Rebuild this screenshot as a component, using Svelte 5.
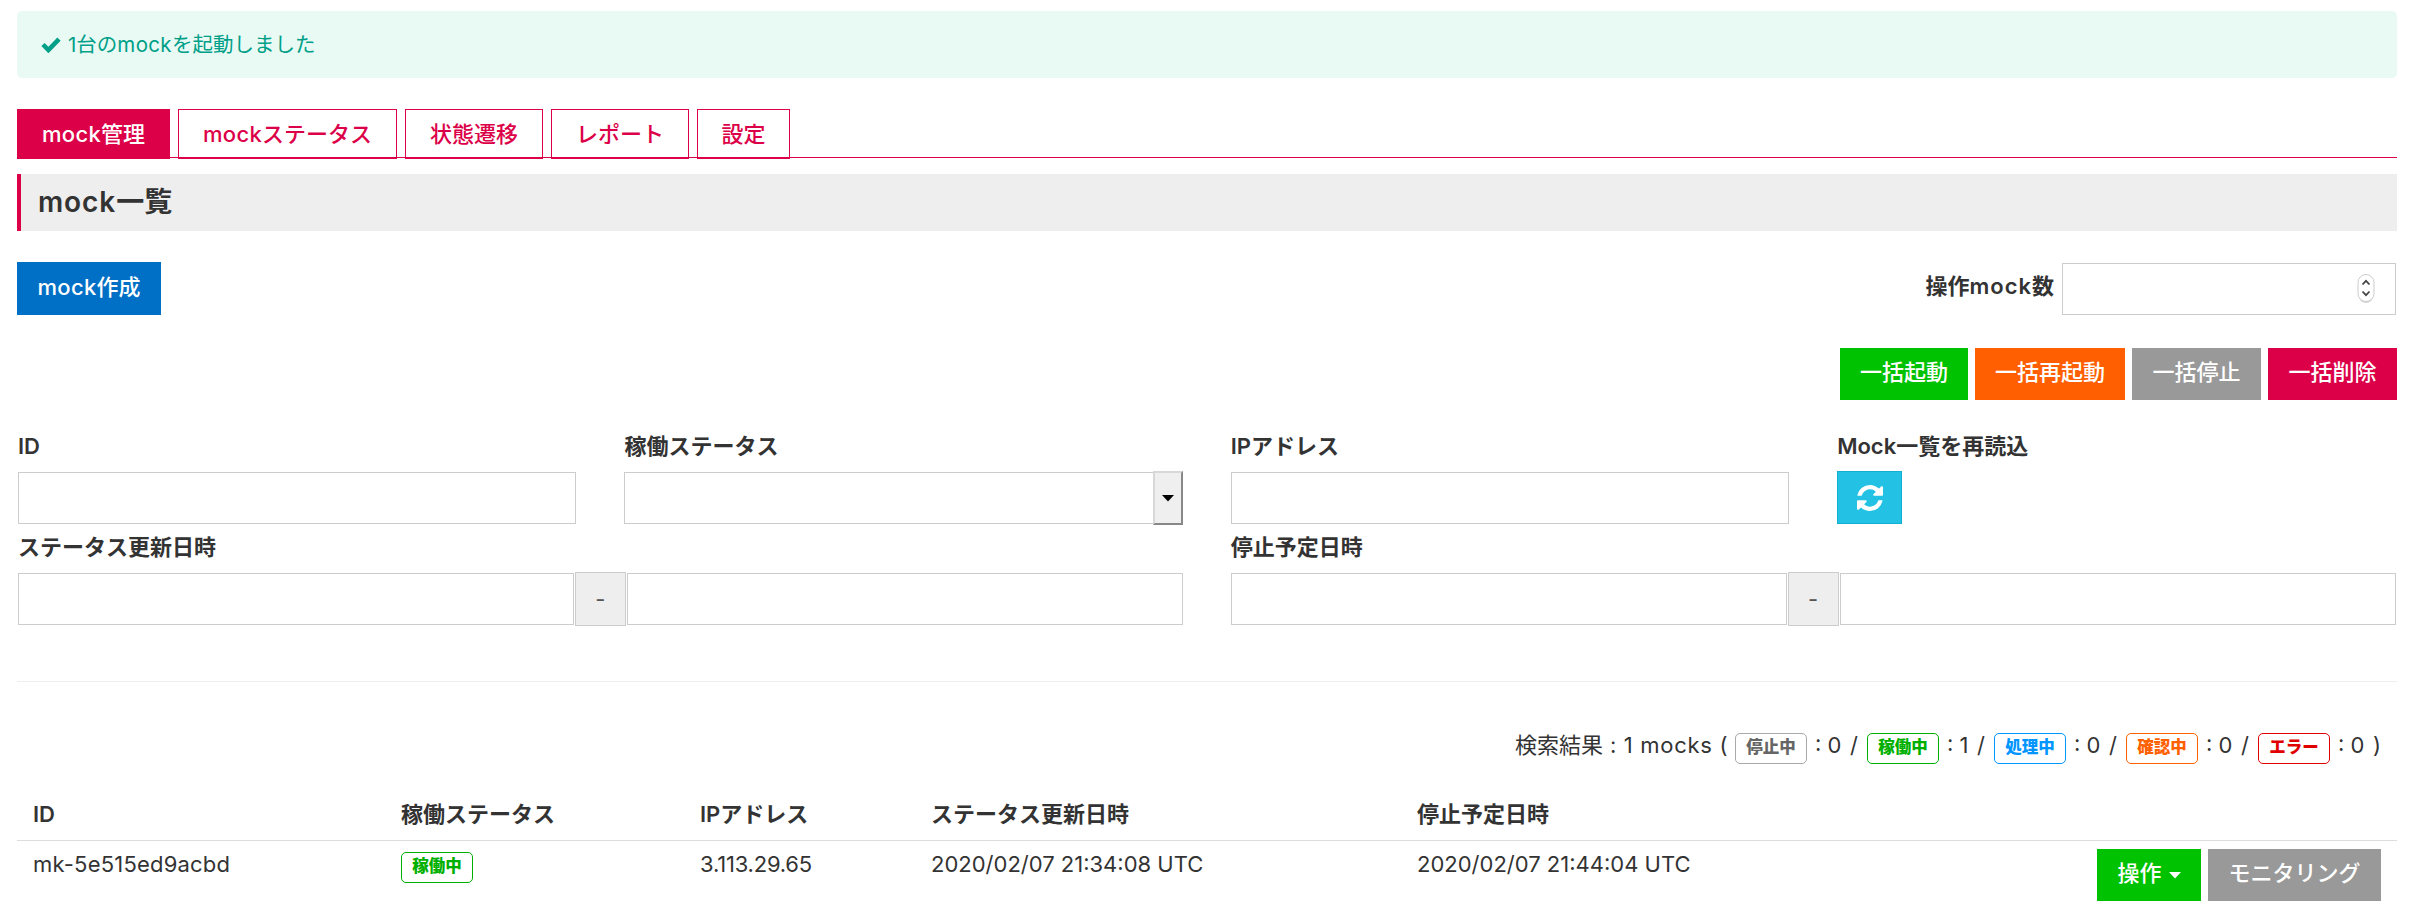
<script>
  const tabs = [
    { latin: 'mock', text: '管理', w: 153, active: true },
    { latin: 'mock', text: 'ステータス', w: 219 },
    { text: '状態遷移', w: 138 },
    { text: 'レポート', w: 138 },
    { text: '設定', w: 93 },
  ];
  const bulk = [
    { text: '一括起動', kind: 'green', w: 128 },
    { text: '一括再起動', kind: 'orange', w: 150 },
    { text: '一括停止', kind: 'gray', w: 129 },
    { text: '一括削除', kind: 'red', w: 129 },
  ];
  const counts = [
    { text: '停止中', kind: 'stopped', n: 0, w: 60 },
    { text: '稼働中', kind: 'running', n: 1, w: 55 },
    { text: '処理中', kind: 'busy', n: 0, w: 60 },
    { text: '確認中', kind: 'checking', n: 0, w: 60 },
    { text: 'エラー', kind: 'error', n: 0, w: 51 },
  ];
</script>

<main>
  <div class="alert">
    <svg width="20" height="16" viewBox="0 0 20 16"><path d="M2 7.5 L7.4 13 L18 2.2" fill="none" stroke="#009f87" stroke-width="4.6" /></svg>
    <span>1台の<span class="lat">mock</span>を起動しました</span>
  </div>

  <nav>
    {#each tabs as t}
      <a class:active={t.active} style="width:{t.w}px">{#if t.latin}<span class="lat">{t.latin}</span>{/if}{t.text}</a>
    {/each}
  </nav>

  <h2><span class="lat">mock</span>一覧</h2>

  <div class="toolbar">
    <button class="btn blue" style="width:144px"><span class="lat">mock</span>作成</button>
    <label class="amount">
      <b>操作<span class="lat">mock</span>数</b>
      <span class="field num">
        <svg width="18" height="32" viewBox="0 0 18 32">
          <rect x="1.5" y="3" width="15" height="27" rx="7.5" fill="#bbb" opacity=".6" />
          <rect x="1" y="1.5" width="16" height="27" rx="8" fill="#fff" stroke="#ccc" />
          <path d="M5.5 11.5 L9 7.8 L12.5 11.5 M5.5 18.5 L9 22.2 L12.5 18.5" fill="none" stroke="#444" stroke-width="1.8" />
        </svg>
      </span>
    </label>
  </div>

  <div class="bulk">
    {#each bulk as b}<button class="btn {b.kind}" style="width:{b.w}px">{b.text}</button>{/each}
  </div>

  <div class="filters">
    <div class="cell"><b>ID</b><div class="field"></div></div>
    <div class="cell"><b>稼働ステータス</b>
      <div class="field select"><i><svg width="12" height="7" viewBox="0 0 12 7"><path d="M0 0H12L6 6.5Z" fill="#000" /></svg></i></div>
    </div>
    <div class="cell"><b>IPアドレス</b><div class="field"></div></div>
    <div class="cell"><b>Mock一覧を再読込</b>
      <button class="reload" aria-label="reload">
        <svg width="26" height="26" viewBox="0 0 1536 1536" fill="#fff"><path d="M1511 928q0 5-1 7-64 268-268 434.500T764 1536q-146 0-282.500-55T238 1324l-129 129q-19 19-45 19t-45-19-19-45V960q0-26 19-45t45-19h448q26 0 45 19t19 45-19 45l-137 137q71 66 161 102t187 36q134 0 250-65t186-179q11-17 53-117 8-23 30-23h192q13 0 22.500 9.500t9.500 22.500zM1536 128v448q0 26-19 45t-45 19h-448q-26 0-45-19t-19-45 19-45l138-138Q969 256 768 256q-134 0-250 65T332 500q-11 17-53 117-8 23-30 23H50q-13 0-22.500-9.500T18 608v-7q65-268 270-434.500T768 0q146 0 284 55.500T1297 212l130-129q19-19 45-19t45 19 19 45z" /></svg>
      </button>
    </div>
    <div class="cell wide"><b>ステータス更新日時</b>
      <div class="range"><div class="field"></div><span>-</span><div class="field"></div></div>
    </div>
    <div class="cell wide"><b>停止予定日時</b>
      <div class="range"><div class="field"></div><span>-</span><div class="field"></div></div>
    </div>
  </div>

  <hr />

  <div class="summary">
    <span class="found">検索結果<span class="lead">{' : 1 mocks ('}</span></span>
    {#each counts as c, i}
      <span class="tag {c.kind}">{c.text}</span><span class="count" style="width:{c.w}px"><span>: {c.n}</span><span>{i < 4 ? '/' : ')'}</span></span>
    {/each}
  </div>

  <div class="row head"><b>ID</b><b>稼働ステータス</b><b>IPアドレス</b><b>ステータス更新日時</b><b>停止予定日時</b></div>
  <div class="row">
    <span class="id">mk-5e515ed9acbd</span>
    <span class="tag running">稼働中</span>
    <span class="ip">3.113.29.65</span>
    <span class="date">2020/02/07 21:34:08 UTC</span>
    <span class="date">2020/02/07 21:44:04 UTC</span>
    <div class="actions">
      <button class="btn green" style="width:104px">操作<svg width="12" height="7" viewBox="0 0 12 7"><path d="M0 0H12L6 6.5Z" fill="#fff" /></svg></button>
      <button class="btn gray" style="width:173px">モニタリング</button>
    </div>
  </div>
</main>

<style>
  :global(body) { margin: 0; background: #fff; }
  main {
    box-sizing: border-box; width: 2412px; height: 916px; overflow: hidden; padding: 11px 15px 0 17px;
    font-family: Inter, "Noto Sans CJK JP", sans-serif; font-size: 22px; line-height: 30px; color: #333;
    display: flex; flex-direction: column;
  }
  main * { box-sizing: border-box; }
  b { font-weight: 600; }
  .lat { letter-spacing: .35px; }
  .alert {
    height: 67px; border-radius: 5px; background: #e9faf5; color: #009f87; font-size: 20.5px;
    display: flex; align-items: center; padding-left: 24px; gap: 7px;
  }
  nav { margin-top: 31px; height: 49px; border-bottom: 1px solid #dc0048; display: flex; gap: 8px; }
  nav a {
    height: 50px; flex: none; border: 1px solid #dc0048; border-bottom-width: 2px; color: #dc0048; font-weight: 500;
    display: flex; align-items: center; justify-content: center;
  }
  nav a.active { background: #dc0048; color: #fff; }
  h2 {
    margin: 16px 0 0; height: 57px; background: #eee; border-left: 4px solid #dc0048; padding-left: 17px;
    font-size: 28px; font-weight: 600; line-height: 56px;
  }
  h2 .lat { letter-spacing: .9px; }
  .toolbar { margin-top: 31px; height: 53px; display: flex; justify-content: space-between; }
  .btn {
    border: 0; padding: 0 0 4px; height: 52px; color: #fff; font: 500 22px/30px Inter, "Noto Sans CJK JP", sans-serif;
    display: flex; align-items: center; justify-content: center; white-space: nowrap;
  }
  .btn svg { margin: 5px 0 0 7px; }
  .blue { background: #006fc6; height: 53px; }
  .green { background: #00c200; }
  .orange { background: #ff5f00; }
  .gray { background: #999; }
  .red { background: #dc0048; }
  .amount { display: flex; padding-right: 1px; gap: 8px; }
  .amount b { padding-top: 9px; }
  .amount .lat { letter-spacing: 1px; }
  .field { height: 52px; border: 1px solid #ccc; background: #fff; }
  .num { width: 334px; margin-top: 1px; display: flex; align-items: center; justify-content: flex-end; padding-right: 20px; }
  .bulk { margin-top: 33px; display: flex; justify-content: flex-end; gap: 7px; }
  .filters { margin: 32px 0 0 1px; width: 2378px; display: grid; grid-template-columns: repeat(4, 558.4px); column-gap: 48px; }
  .cell { height: 101px; }
  .cell b { display: block; height: 40px; line-height: 29px; }
  .wide { grid-column: span 2; height: 100px; }
  .select { display: flex; justify-content: flex-end; }
  .select i {
    width: 30px; height: 54px; margin: -2px -1px 0 0; background: #efefef; border: 2px solid; border-color: #d8d8d8 #888 #888 #d8d8d8;
    display: flex; align-items: center; justify-content: center;
  }
  .reload {
    width: 65px; height: 53px; margin: -1px 0 0 0; padding: 0; background: #23c1e4; border: 1px solid #12afd2;
    display: flex; align-items: center; justify-content: center;
  }
  .range { display: flex; align-items: center; height: 52px; }
  .range .field { flex: 1; }
  .range span {
    width: 51px; height: 54px; margin: 0 1px; background: #eee; border: 1px solid #ccc; text-align: center; line-height: 52px; color: #555;
  }
  hr { width: 100%; margin: 48px 0 0; border: 0; border-top: 1px solid #eee; }
  .summary { margin-top: 48px; height: 36px; padding-right: 16px; display: flex; justify-content: flex-end; }
  .found { width: 220px; white-space: pre; }
  .lead { letter-spacing: .7px; }
  .tag {
    width: 72px; height: 31px; margin-top: 3px; border: 1px solid; border-radius: 5px; text-align: center;
    font-size: 16.5px; font-weight: 900; line-height: 27px; flex: none;
  }
  .stopped { color: #666; border-color: #aaa; }
  .running { color: #00b000; }
  .busy { color: #0095ff; }
  .checking { color: #ff6000; }
  .error { color: #e00000; }
  .count { display: flex; justify-content: space-between; padding: 0 9px 0 8px; }
  .count:last-child { padding-right: 0; }
  .row { display: grid; grid-template-columns: 368px 299px 231px 486px 1fr auto; padding: 9px 16px 0; border-top: 1px solid #ddd; height: 76px; line-height: 29px; }
  .head { border-top: 0; margin-top: 29px; padding-top: 5px; margin-bottom: -4px; height: 49px; }
  .row .tag { margin-top: 2px; line-height: 27px; }
  .id { letter-spacing: .2px; }
  .ip { letter-spacing: -.2px; }
  .actions { display: flex; gap: 7px; margin-top: -1px; }
</style>
